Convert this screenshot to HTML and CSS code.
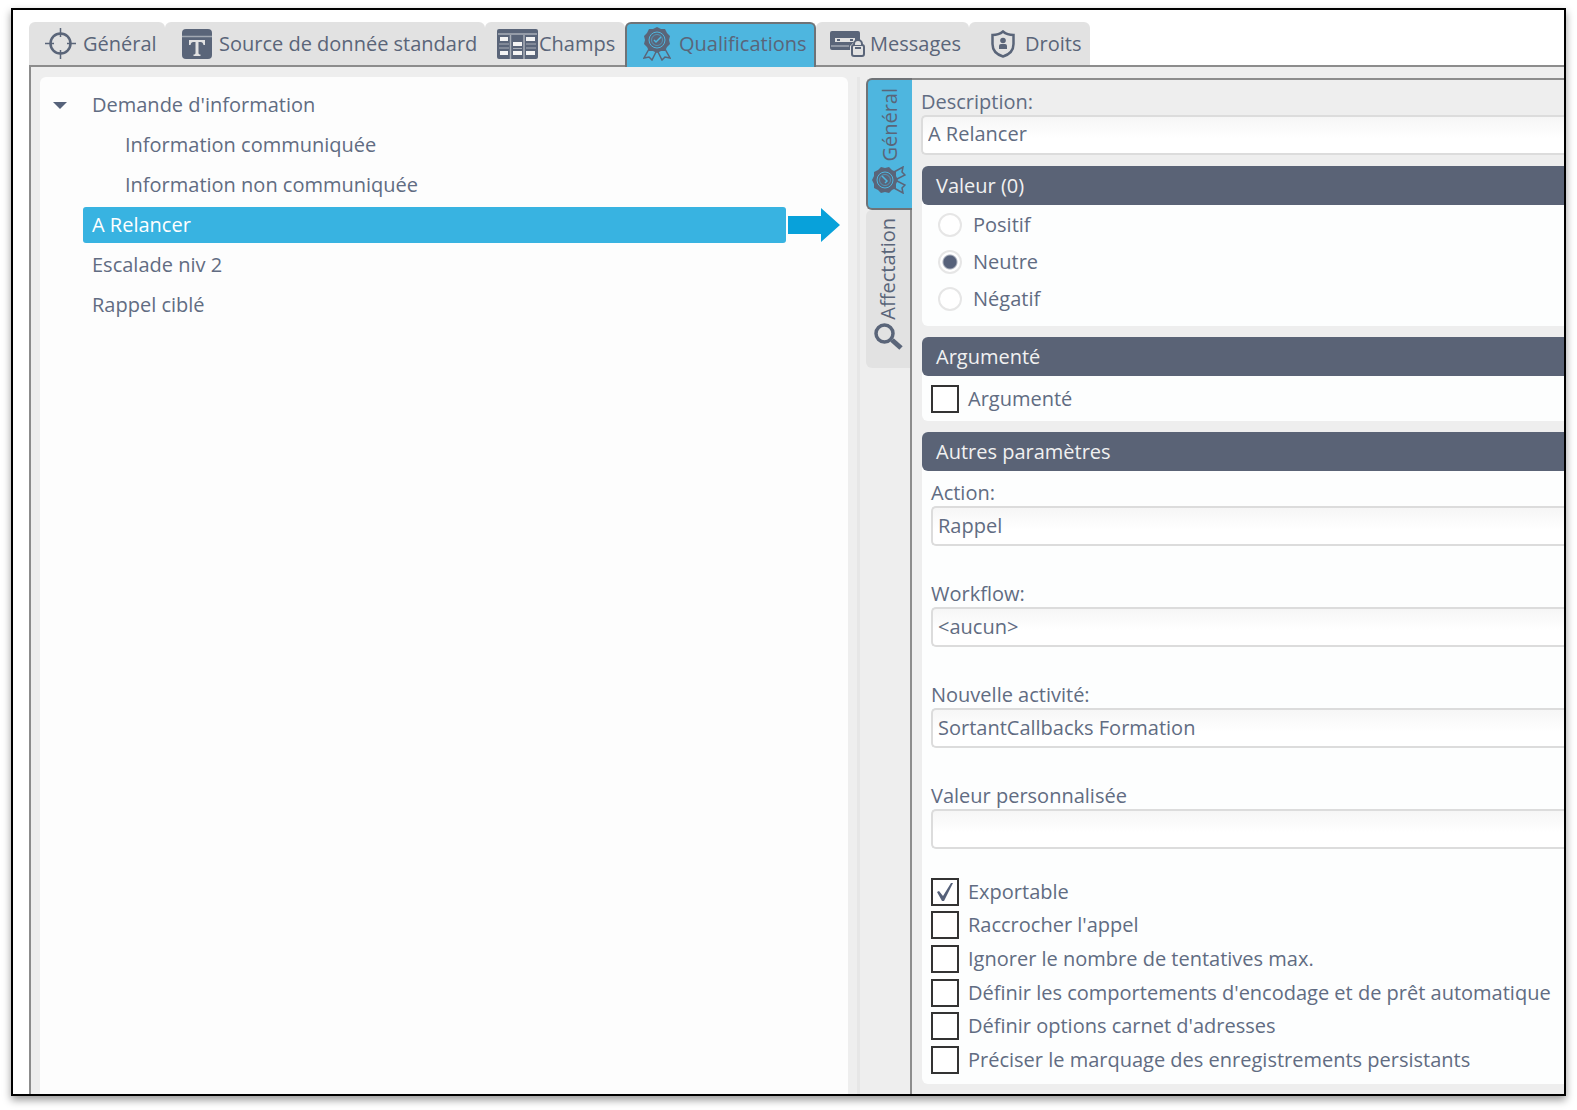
FILE: index.html
```html
<!DOCTYPE html>
<html lang="fr">
<head>
<meta charset="utf-8">
<title>Qualifications</title>
<link rel="stylesheet" href="styles.css">
</head>
<body>
<svg class="defs" aria-hidden="true">
  <symbol id="rosette" viewBox="0 0 28 34">
    <path d="M6 22 1 31l5-1 3 3 4-8M22 22l5 9-5-1-3 3-4-8" fill="none" stroke="currentColor" stroke-width="1.500"/>
    <path d="M14 0l4 2 4 0 2 4 3 3-1 4 1 4-3 3-2 4-4 0-4 2-4-2-4 0-2-4-3-3 1-4-1-4 3-3 2-4 4 0z" fill="currentColor"/>
    <circle cx="14" cy="13" r="8" fill="none" stroke="#4eb6df" stroke-width="1"/>
    <circle cx="14" cy="13" r="5.500" fill="none" stroke="#4eb6df" stroke-width=".6"/>
    <path d="M11 13l2 2 5-5" fill="none" stroke="#4eb6df" stroke-width="1.500"/>
  </symbol>
</svg>
<div class="window">
  <nav class="tabs" role="tablist">
    <button class="tab tab-general" role="tab">
      <svg width="31" height="31" viewBox="0 0 31 31" fill="none" stroke="currentColor"><circle cx="15.500" cy="15.500" r="10" stroke-width="2.500"/><path d="M15.500 0v9M15.500 22v9M0 15.500h9M22 15.500h9" stroke-width="1.500"/></svg>
      <span>Général</span>
    </button>
    <button class="tab tab-source" role="tab">
      <svg width="30" height="30" viewBox="0 0 30 30"><rect width="30" height="30" rx="4" fill="currentColor"/><path d="M0 7.500h30" stroke="#a3a9b3" stroke-width="1.500"/><path d="M7 11h16v5h-1.500c-.5-2-1-3-3-3H16.500v11c0 1 1 1.500 2 1.500V27h-7v-1.500c1 0 2-.5 2-1.500V13h-2c-2 0-2.500 1-3 3H7z" fill="#e2e2e2"/></svg>
      <span>Source de donnée standard</span>
    </button>
    <button class="tab tab-fields" role="tab">
      <svg width="41" height="30" viewBox="0 0 41 30"><rect width="41" height="30" rx="2" fill="currentColor"/><path d="M1 5h39M13.500 6v24M27 6v24" stroke="#a9afb8" stroke-width="1.500"/><path d="M3 8h8v4H3zM3 22h8v4H3zM16 13h9v4h-9zM16 22h9v4h-9zM29 8h9v4h-9zM29 22h9v4h-9z" fill="#f4f4f4"/><path d="M2 15h10M2 19h10M16 19.500h9M29 15h10M29 19h10" stroke="#a9afb8"/></svg>
      <span>Champs</span>
    </button>
    <button class="tab tab-qualif active" role="tab" aria-selected="true">
      <svg width="28" height="34"><use href="#rosette"/></svg>
      <span>Qualifications</span>
    </button>
    <button class="tab tab-messages" role="tab">
      <svg width="35" height="26" viewBox="0 0 35 26"><path d="M2 0h26a2 2 0 0 1 2 2v9h-6l-4 4v4H2a2 2 0 0 1-2-2V2a2 2 0 0 1 2-2z" fill="currentColor"/><path d="M5 7h20v4H5z" fill="#e2e2e2"/><path d="M7 9h3M20 9h3" stroke="currentColor" stroke-width="2"/><path d="M1 15h18" stroke="#a3a9b3" stroke-width="1.500"/><rect x="22" y="14" width="12" height="11" rx="2" fill="#e2e2e2" stroke="currentColor" stroke-width="2"/><path d="M24 14v-1a4 4 0 0 1 8 0v1" fill="#e2e2e2" stroke="currentColor" stroke-width="2"/><path d="M25 17h6" stroke="currentColor" stroke-width="2"/></svg>
      <span>Messages</span>
    </button>
    <button class="tab tab-rights" role="tab">
      <svg width="24" height="28" viewBox="0 0 24 28"><path d="M12 1.500c3 2.500 6.500 3.500 10.500 3.500v9c0 6-4 10.500-10.500 12.500C5.500 24.500 1.500 20 1.500 14V5C5.500 5 9 4 12 1.500z" fill="none" stroke="currentColor" stroke-width="2.500"/><circle cx="12" cy="10.500" r="2.800" fill="currentColor"/><path d="M8 19v-3q0-2 2-2h4q2 0 2 2v3z" fill="currentColor"/></svg>
      <span>Droits</span>
    </button>
  </nav>

  <main class="panel">
    <section class="tree" aria-label="Qualifications">
      <ul>
        <li>
          <div class="node"><svg class="caret" width="14" height="8" viewBox="0 0 14 8"><path d="M0 0h14L7 7z" fill="#56627a"/></svg><span class="node-label">Demande d'information</span></div>
          <ul class="children">
            <li class="node"><span class="node-label">Information communiquée</span></li>
            <li class="node"><span class="node-label">Information non communiquée</span></li>
          </ul>
        </li>
        <li class="node"><span class="node-label selected">A Relancer</span><svg class="arrow" width="52" height="34" viewBox="0 0 52 34"><path d="M0 8h33V0l19 17-19 17v-8H0z" fill="#08a1da"/></svg></li>
        <li class="node"><span class="node-label">Escalade niv 2</span></li>
        <li class="node"><span class="node-label">Rappel ciblé</span></li>
      </ul>
    </section>
    <div class="splitter"></div>
    <section class="detail">
      <nav class="side-tabs" role="tablist">
        <button class="side-tab active" role="tab" aria-selected="true">
          <span>Général</span>
          <svg width="36" height="28" viewBox="0 0 36 28"><g transform="translate(0 28) rotate(-90)"><use href="#rosette" width="28" height="34"/></g></svg>
        </button>
        <button class="side-tab" role="tab">
          <span>Affectation</span>
          <svg width="30" height="28" viewBox="0 0 30 28" fill="none" stroke="currentColor"><circle cx="11.500" cy="10.500" r="8.500" stroke-width="3.500"/><path d="M19 17l9 8" stroke-width="5"/></svg>
        </button>
      </nav>
      <form class="form">
        <div class="field description">
          <label for="desc">Description:</label>
          <input id="desc" class="control" type="text" value="A Relancer">
        </div>
        <fieldset class="card">
          <legend>Valeur (0)</legend>
          <div class="radios">
            <label><input type="radio" name="valeur">Positif</label>
            <label><input type="radio" name="valeur" checked>Neutre</label>
            <label><input type="radio" name="valeur">Négatif</label>
          </div>
        </fieldset>
        <fieldset class="card">
          <legend>Argumenté</legend>
          <div class="checks single">
            <label><input type="checkbox">Argumenté</label>
          </div>
        </fieldset>
        <fieldset class="card">
          <legend>Autres paramètres</legend>
          <div class="fields">
            <div class="field"><label for="action">Action:</label><select id="action" class="control"><option>Rappel</option></select></div>
            <div class="field"><label for="workflow">Workflow:</label><select id="workflow" class="control"><option>&lt;aucun&gt;</option></select></div>
            <div class="field"><label for="activite">Nouvelle activité:</label><select id="activite" class="control"><option>SortantCallbacks Formation</option></select></div>
            <div class="field"><label for="perso">Valeur personnalisée</label><input id="perso" class="control" type="text"></div>
          </div>
          <div class="checks">
            <label><input type="checkbox" checked>Exportable</label>
            <label><input type="checkbox">Raccrocher l'appel</label>
            <label><input type="checkbox">Ignorer le nombre de tentatives max.</label>
            <label><input type="checkbox">Définir les comportements d'encodage et de prêt automatique</label>
            <label><input type="checkbox">Définir options carnet d'adresses</label>
            <label><input type="checkbox">Préciser le marquage des enregistrements persistants</label>
          </div>
        </fieldset>
      </form>
    </section>
  </main>
</div>
</body>
</html>
```
FILE: styles.css
```css
* { box-sizing: border-box; }

body {
  margin: 0;
  min-height: 100vh;
  padding: 8px 11px 14px;
  display: flex;
  background: #fff;
  color: #616c82;
  font: 20px/28px "Open Sans", "Noto Sans", sans-serif;
}

button, input, select { font: inherit; color: inherit; }
button { border: 0; padding: 0; margin: 0; background: none; }
ul { list-style: none; margin: 0; padding: 0; }
svg { flex: none; display: block; }
.defs { position: absolute; width: 0; height: 0; }

.window {
  flex: 1;
  min-width: 0;
  display: flex;
  flex-direction: column;
  border: 2px solid #000;
  padding: 12px 0 0 16px;
  box-shadow: 0 4px 8px rgba(0, 0, 0, .4);
  overflow: hidden;
}

/* Top tabs */
.tabs { display: flex; height: 43px; }
.tab {
  display: flex;
  align-items: center;
  background: #e2e2e2;
  border-radius: 6px 6px 0 0;
  white-space: nowrap;
  color: #5a6579;
}
.tab-general { width: 136px; padding-left: 16px; gap: 7px; }
.tab-source { width: 320px; padding-left: 17px; gap: 7px; }
.tab-fields { width: 140px; padding-left: 12px; gap: 1px; }
.tab-qualif { width: 191px; padding-left: 16px; gap: 8px; }
.tab-messages { width: 153px; padding-left: 14px; gap: 5px; }
.tab-rights { width: 121px; padding-left: 22px; gap: 10px; }
.tab.active {
  background: #4eb6df;
  border: 2px solid #6f7377;
  border-bottom: 0;
  margin-bottom: -2px;
  padding-bottom: 3px;
  z-index: 1;
}

.panel {
  flex: 1;
  display: flex;
  min-width: 0;
  background: #eee;
  border: solid #8c8c8c;
  border-width: 2px 0 0 2px;
  padding-left: 9px;
}

/* Tree */
.tree {
  flex: 0 0 808px;
  margin-top: 10px;
  padding: 8px 8px 0 9px;
  background: #fdfdfd;
  border-radius: 6px 6px 0 0;
}
.node { display: flex; align-items: center; height: 40px; padding-left: 34px; }
.children .node { padding-left: 67px; }
.node-label { padding: 4px 9px; }
.caret { margin: 2px 16px 0 -30px; }
.selected {
  flex: 1;
  background: #38b3e1;
  color: #fff;
  border-radius: 3px;
}
.arrow { margin-left: 2px; }

.splitter { width: 3px; margin: 10px 6px 0 9px; background: #e6e6e6; }

/* Detail */
.detail { flex: 1; min-width: 0; display: flex; margin-top: 11px; }
.side-tabs {
  width: 46px;
  display: flex;
  flex-direction: column;
}
.side-tabs::after { content: ""; flex: 1; border-right: 2px solid #8c8c8c; }
.side-tab {
  display: flex;
  flex-direction: column;
  align-items: center;
  gap: 4px;
  padding: 8px 0 17px;
  background: #e2e2e2;
  border-right: 2px solid #8c8c8c;
  border-radius: 6px 0 0 6px;
  color: #5a6579;
}
.side-tab span { writing-mode: vertical-rl; transform: rotate(180deg); }
.side-tab.active {
  background: #4eb6df;
  border: 2px solid #6f7377;
  border-right: 0;
  padding: 8px 0 14px;
}

.form {
  flex: 1;
  min-width: 0;
  border-top: 2px solid #8c8c8c;
  padding: 9px 0 10px 9px;
  display: flex;
  flex-direction: column;
  gap: 11px;
}
.field { display: flex; flex-direction: column; }
.field label { line-height: 26px; }
.control {
  width: 100%;
  height: 40px;
  margin: 0;
  padding: 0 5px;
  appearance: none;
  border: 2px solid #dcdcdc;
  border-right: 0;
  border-radius: 5px 0 0 5px;
  background: linear-gradient(#f6f6f6, #fff 60%);
}
.description .control { padding-bottom: 4px; }

.card {
  margin: 0 0 0 1px;
  padding: 0;
  border: 0;
  min-width: 0;
  background: #fdfefe;
  border-radius: 6px 0 0 6px;
}
.card legend {
  float: left;
  width: 100%;
  height: 39px;
  padding: 6px 14px;
  background: #5a6376;
  color: #f1f1f1;
  border-radius: 6px 0 0 6px;
}
.card > div { clear: both; }
.card label { white-space: nowrap; }

.radios { padding: 1px 16px 9px; }
.radios label { display: flex; align-items: center; gap: 11px; height: 37px; }
.radios input {
  appearance: none;
  width: 24px;
  height: 24px;
  margin: 0;
  border: 2px solid #e6e6e6;
  border-radius: 50%;
  background: #fff;
}
.radios input:checked { background: radial-gradient(circle, #56617a 6px, #fff 8px); }

.fields { padding: 9px 0 0 9px; display: flex; flex-direction: column; gap: 35px; }
.checks {
  display: grid;
  min-height: 202px;
  padding-left: 9px;
  margin: 26px 0 7px;
  align-items: center;
}
.checks label { display: flex; align-items: center; gap: 9px; }
.checks.single { min-height: 45px; margin: 0; }
.checks input {
  appearance: none;
  width: 28px;
  height: 28px;
  margin: 0;
  border: 2px solid #333;
  background: #fff;
}
.checks input:checked {
  background: #fff url("data:image/svg+xml,%3Csvg xmlns='http://www.w3.org/2000/svg' viewBox='0 0 24 24'%3E%3Cpath d='M4 12l2-1 4 5L18 3l2 0L11 21H9z' fill='%2356617a'/%3E%3C/svg%3E") center / 24px no-repeat;
}
```
